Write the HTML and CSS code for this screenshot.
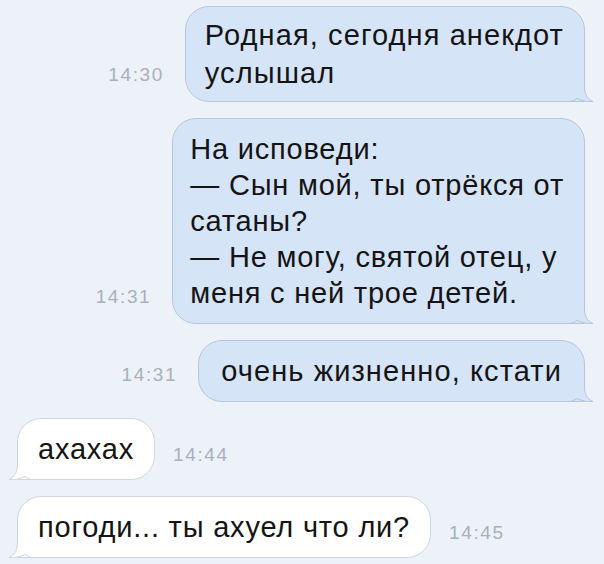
FILE: index.html
```html
<!DOCTYPE html>
<html lang="ru">
<head>
    <meta charset="UTF-8">
    <meta name="viewport" content="width=device-width, initial-scale=1.0">
    <title>Диалог</title>
    <link rel="stylesheet" href="styles.css">
</head>
<body>
    <div class="chat">
        <div class="row out first">
            <span class="time">14:30</span>
            <div class="bubble">
                Родная, сегодня анекдот<br>услышал
                <svg class="tail" viewBox="0 0 24 16" width="24" height="16"><path class="tail-fill" d="M0 0H15.5C15.5 8 18 13 24 15.5C18 16 12 14.5 8 12.5C5 14.5 2 15.5 0 15.5Z"/><path class="tail-line" d="M15.5 0C15.5 8 18 13 24 15.5C18 16 12 14.5 8 12.5C5 14.5 2 15.5 0 15.5"/></svg>
            </div>
        </div>
        <div class="row out second">
            <span class="time">14:31</span>
            <div class="bubble">
                На исповеди:<br>— Сын мой, ты отрёкся от<br>сатаны?<br>— Не могу, святой отец, у<br>меня с ней трое детей.
                <svg class="tail" viewBox="0 0 24 16" width="24" height="16"><path class="tail-fill" d="M0 0H15.5C15.5 8 18 13 24 15.5C18 16 12 14.5 8 12.5C5 14.5 2 15.5 0 15.5Z"/><path class="tail-line" d="M15.5 0C15.5 8 18 13 24 15.5C18 16 12 14.5 8 12.5C5 14.5 2 15.5 0 15.5"/></svg>
            </div>
        </div>
        <div class="row out third">
            <span class="time">14:31</span>
            <div class="bubble">
                очень жизненно, кстати
                <svg class="tail" viewBox="0 0 24 16" width="24" height="16"><path class="tail-fill" d="M0 0H15.5C15.5 8 18 13 24 15.5C18 16 12 14.5 8 12.5C5 14.5 2 15.5 0 15.5Z"/><path class="tail-line" d="M15.5 0C15.5 8 18 13 24 15.5C18 16 12 14.5 8 12.5C5 14.5 2 15.5 0 15.5"/></svg>
            </div>
        </div>
        <div class="row in">
            <div class="bubble">
                ахахах
                <svg class="tail" viewBox="0 0 24 16" width="24" height="16"><path class="tail-fill" d="M0 0H15.5C15.5 8 18 13 24 15.5C18 16 12 14.5 8 12.5C5 14.5 2 15.5 0 15.5Z"/><path class="tail-line" d="M15.5 0C15.5 8 18 13 24 15.5C18 16 12 14.5 8 12.5C5 14.5 2 15.5 0 15.5"/></svg>
            </div>
            <span class="time">14:44</span>
        </div>
        <div class="row in">
            <div class="bubble">
                погоди... ты ахуел что ли?
                <svg class="tail" viewBox="0 0 24 16" width="24" height="16"><path class="tail-fill" d="M0 0H15.5C15.5 8 18 13 24 15.5C18 16 12 14.5 8 12.5C5 14.5 2 15.5 0 15.5Z"/><path class="tail-line" d="M15.5 0C15.5 8 18 13 24 15.5C18 16 12 14.5 8 12.5C5 14.5 2 15.5 0 15.5"/></svg>
            </div>
            <span class="time">14:45</span>
        </div>
    </div>
</body>
</html>
```
FILE: styles.css
```css
body {
    margin: 0;
    background-color: #edf1f8;
    font-family: 'Liberation Sans', Arial, sans-serif;
    color: #141414;
}
.chat {
    display: flex;
    flex-direction: column;
    gap: 16px;
    padding: 6px 19px 0 17px;
}
.row {
    display: flex;
    align-items: flex-end;
}
.row.out {
    justify-content: flex-end;
}
.bubble {
    position: relative;
    font-size: 29px;
    letter-spacing: 0.8px;
    line-height: 36px;
    padding: 12px 20px;
    border-radius: 24px;
}
.out .bubble {
    background-color: #d6e4f8;
    border: 1px solid #b7c6da;
    border-bottom-right-radius: 0;
}
.in .bubble {
    background-color: #ffffff;
    border: 1px solid #d0d6df;
    border-bottom-left-radius: 0;
}
.first .bubble {
    line-height: 38px;
    letter-spacing: 1.1px;
    padding: 9px 20px 9px 19px;
}
.second .bubble {
    padding: 12px 20px 12px 17px;
}
.third .bubble {
    letter-spacing: 1.1px;
    padding: 12px 22px 12px 22px;
}
.time {
    font-size: 19px;
    letter-spacing: 1.6px;
    color: #aab0b9;
    padding-bottom: 16px;
}
.out .time {
    margin-right: 21px;
}
.in .time {
    margin-left: 18px;
    padding-bottom: 14px;
}
.tail {
    position: absolute;
    bottom: -1px;
    right: -9px;
}
.in .tail {
    right: auto;
    left: -9px;
    transform: scaleX(-1);
}
.tail-line {
    fill: none;
    stroke-width: 1;
}
.out .tail-fill {
    fill: #d6e4f8;
}
.out .tail-line {
    stroke: #b7c6da;
}
.in .tail-fill {
    fill: #ffffff;
}
.in .tail-line {
    stroke: #d0d6df;
}
```
